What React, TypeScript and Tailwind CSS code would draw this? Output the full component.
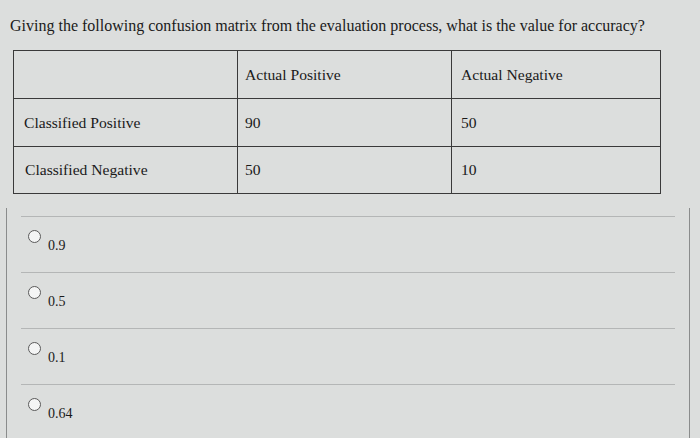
import React from "react";

const options = ["0.9", "0.5", "0.1", "0.64"];

export default function App() {
  return (
    <div
      className="w-[700px] h-[438px] overflow-hidden bg-[#dcdedd] text-[#1a1a1a]"
      style={{ fontFamily: '"Liberation Serif", "Times New Roman", serif' }}
    >
      <div className="pt-[16px] pl-[10px] text-[16px] leading-[20px]">
        Giving the following confusion matrix from the evaluation process, what is the value for accuracy?
      </div>
      <table className="mt-[14px] ml-[13px] w-[648px] border-collapse text-[15.6px] leading-[18px]">
        <tbody>
          <tr className="h-[48px]">
            <td className="w-[224px] border border-[#3a3a3a] px-[10px]"></td>
            <td className="w-[214px] border border-[#3a3a3a] px-[7px]">Actual Positive</td>
            <td className="border border-[#3a3a3a] px-[9px]">Actual Negative</td>
          </tr>
          <tr className="h-[48px]">
            <td className="border border-[#3a3a3a] px-[10px]">Classified Positive</td>
            <td className="border border-[#3a3a3a] px-[7px]">90</td>
            <td className="border border-[#3a3a3a] px-[9px]">50</td>
          </tr>
          <tr className="h-[47px]">
            <td className="border border-[#3a3a3a] px-[11px]">Classified Negative</td>
            <td className="border border-[#3a3a3a] px-[7px]">50</td>
            <td className="border border-[#3a3a3a] px-[9px]">10</td>
          </tr>
        </tbody>
      </table>
      <div className="mt-[14px] ml-[6px] w-[684px] h-[240px] border-l border-r border-[#8a8c8c] pt-[8px]">
        <div className="mx-[14px]">
          {options.map((o) => (
            <div key={o} className="h-[56px] border-t border-[#b4b6b6] flex items-start pl-[7px]">
              <div className="mt-[13px] w-[13px] h-[13px] rounded-full border border-[#5a5a5a] bg-[#f4f5f5]"></div>
              <div className="mt-[20px] ml-[7px] text-[14px] leading-[17px]">{o}</div>
            </div>
          ))}
        </div>
      </div>
    </div>
  );
}
